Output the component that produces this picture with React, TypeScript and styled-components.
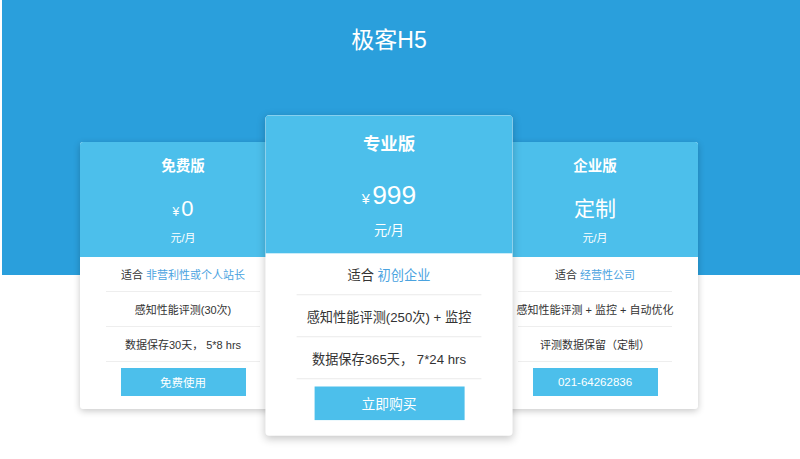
import React from "react";
import styled, { createGlobalStyle } from "styled-components";

const GlobalStyle = createGlobalStyle`
  html, body { margin: 0; padding: 0; background: #ffffff; }
  body {
    font-family: "Liberation Sans", "Noto Sans CJK SC", sans-serif;
    color: #333333;
  }
`;

const Page = styled.div`
  width: 800px;
  height: 459px;
  overflow: hidden;
  background: #ffffff;
`;

const Hero = styled.section`
  margin-left: 2px;
  padding-left: 78px;
  height: 459px;
  background: linear-gradient(#2a9fdc 0, #2a9fdc 275px, #ffffff 275px);
`;

const Column = styled.div`
  width: 618px;
  display: flex;
  flex-direction: column;
  align-items: center;
`;

const PageTitle = styled.h1`
  margin: 0;
  padding-top: 25px;
  line-height: 30px;
  font-size: 23px;
  font-weight: 400;
  color: #ffffff;
  letter-spacing: 0;
`;

const Cards = styled.div`
  margin-top: 87px;
  display: flex;
  align-items: flex-start;
`;

const Card = styled.div<{ $featured?: boolean }>`
  width: 206px;
  background: #ffffff;
  border-radius: 3px;
  box-shadow: 0 2px 7px rgba(0, 0, 0, 0.22);
  overflow: hidden;
  position: relative;
  z-index: ${(p) => (p.$featured ? 2 : 1)};
  transform: ${(p) => (p.$featured ? "scale(1.2)" : "none")};
`;

const Header = styled.div`
  background: #4cbfeb;
  color: #ffffff;
  height: 115px;
  box-sizing: border-box;
  padding-top: 14px;
  display: flex;
  flex-direction: column;
  align-items: center;
`;

const PlanName = styled.div`
  font-size: 14.5px;
  font-weight: 700;
  line-height: 20px;
`;

const Price = styled.div`
  margin-top: 18px;
  line-height: 30px;
  height: 30px;
  display: flex;
  align-items: baseline;
`;

const Currency = styled.span`
  font-size: 12px;
  margin-right: 2px;
`;

const Amount = styled.span<{ $text?: boolean }>`
  font-size: ${(p) => (p.$text ? "21px" : "22px")};
  font-weight: 400;
`;

const Unit = styled.div`
  margin-top: 6px;
  font-size: 11px;
  line-height: 16px;
`;

const Body = styled.div`
  padding: 0 26px 13px;
  display: flex;
  flex-direction: column;
  align-items: stretch;
`;

const Row = styled.div`
  height: 34px;
  border-bottom: 1px solid #eeeeee;
  display: flex;
  align-items: center;
  justify-content: center;
  font-size: 11px;
  white-space: nowrap;
  color: #333333;
`;

const Highlight = styled.span`
  color: #4aa3df;
  margin-left: 3px;
`;

const Action = styled.button`
  margin: 6px auto 0;
  width: 125px;
  height: 28px;
  border: none;
  border-radius: 0;
  background: #4cbfeb;
  color: #ffffff;
  font-family: "Liberation Sans", "Noto Sans CJK SC", sans-serif;
  font-size: 11.5px;
  padding: 0;
  cursor: pointer;
`;

type Plan = {
  name: string;
  price: string;
  isText?: boolean;
  fit: string;
  feature: string;
  storage: string;
  action: string;
  featured?: boolean;
};

const plans: Plan[] = [
  {
    name: "免费版",
    price: "0",
    fit: "非营利性或个人站长",
    feature: "感知性能评测(30次)",
    storage: "数据保存30天， 5*8 hrs",
    action: "免费使用",
  },
  {
    name: "专业版",
    price: "999",
    fit: "初创企业",
    feature: "感知性能评测(250次) + 监控",
    storage: "数据保存365天， 7*24 hrs",
    action: "立即购买",
    featured: true,
  },
  {
    name: "企业版",
    price: "定制",
    isText: true,
    fit: "经营性公司",
    feature: "感知性能评测 + 监控 + 自动优化",
    storage: "评测数据保留（定制）",
    action: "021-64262836",
  },
];

export default function App() {
  return (
    <Page>
      <GlobalStyle />
      <Hero>
        <Column>
          <PageTitle>极客H5</PageTitle>
          <Cards>
            {plans.map((p) => (
              <Card key={p.name} $featured={p.featured}>
                <Header>
                  <PlanName>{p.name}</PlanName>
                  <Price>
                    {!p.isText && <Currency>¥</Currency>}
                    <Amount $text={p.isText}>{p.price}</Amount>
                  </Price>
                  <Unit>元/月</Unit>
                </Header>
                <Body>
                  <Row>
                    适合<Highlight>{p.fit}</Highlight>
                  </Row>
                  <Row>{p.feature}</Row>
                  <Row>{p.storage}</Row>
                  <Action>{p.action}</Action>
                </Body>
              </Card>
            ))}
          </Cards>
        </Column>
      </Hero>
    </Page>
  );
}
